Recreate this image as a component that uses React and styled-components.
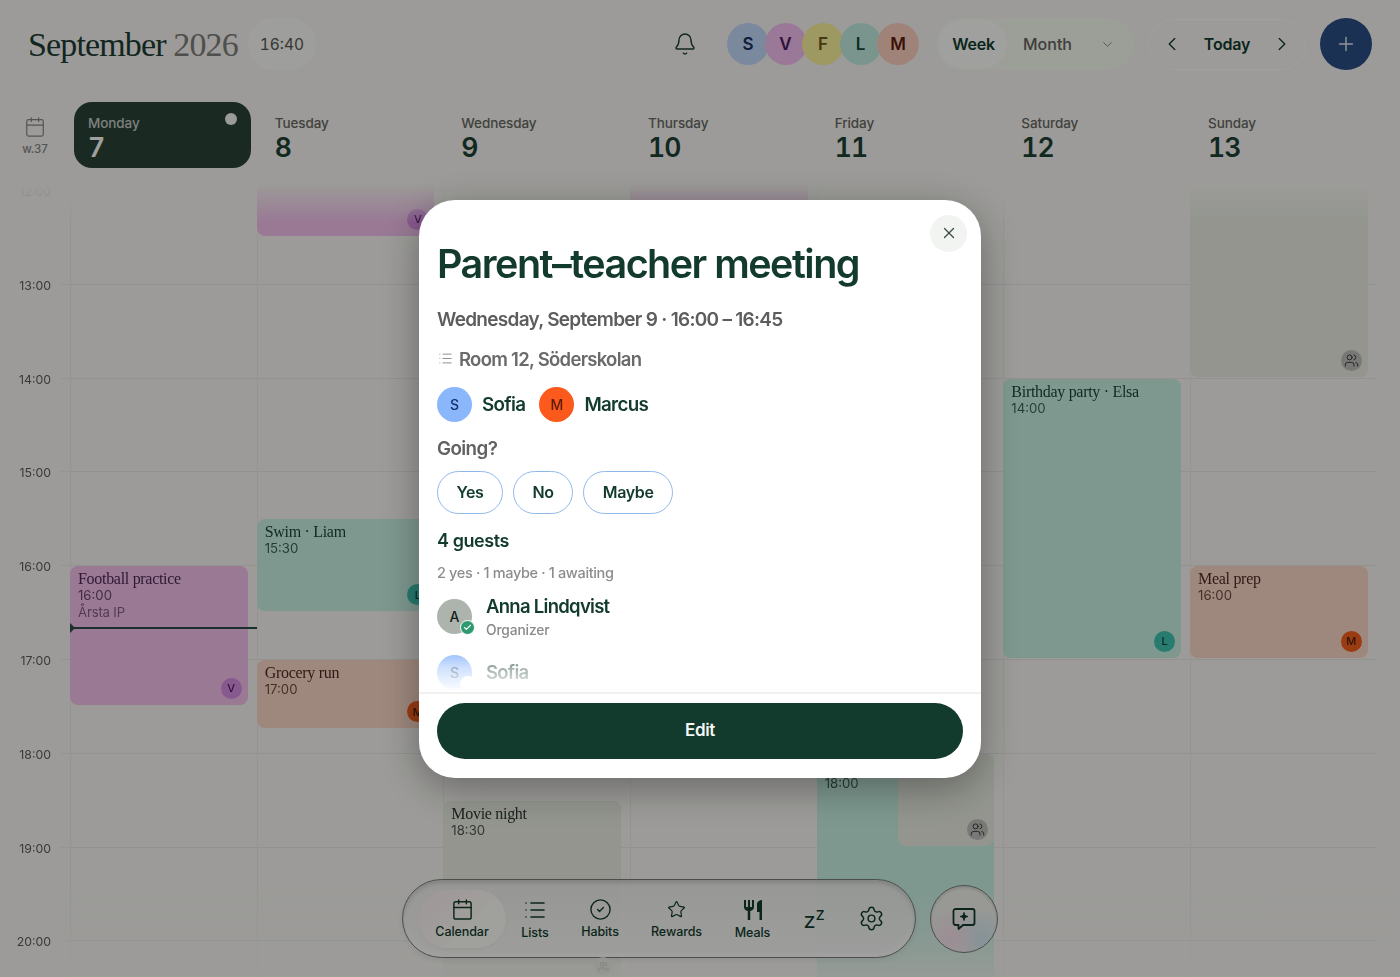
import React from 'react';
import styled, { createGlobalStyle } from 'styled-components';
import { Bell, Calendar, ChevronDown, ChevronLeft, ChevronRight, CircleCheck, List, Plus, Settings, Star, Users, X, Check } from 'lucide-react';
import { MdRestaurant } from 'react-icons/md';

const HOUR = 93.8;
const SANS = '"Inter", "Liberation Sans", sans-serif';
const SERIF = '"Liberation Serif", serif';

const Global = createGlobalStyle`
  * { box-sizing: border-box; }
  html, body { margin: 0; height: 100%; overflow: hidden; background: #f4f3ef; }
  body { font-family: ${SANS}; color: #123a2d; }
`;

const Page = styled.div`
  position: relative; width: 1400px; height: 977px; overflow: hidden; background: #f4f3ef;
  display: flex; flex-direction: column;
`;
const Header = styled.header`
  display: flex; align-items: center; height: 88px; padding: 0 28px; flex: none;
`;
const Title = styled.h1`
  margin: 2px 0 0; font: 400 34px/1 ${SERIF}; letter-spacing: -.86px; color: #1d3c32; white-space: nowrap;
  span { color: #7c7c78; }
`;
const Clock = styled.div`
  margin: 0 0 0 10px; width: 68px; height: 52px; border-radius: 26px; background: #f8f8f4;
  display: flex; align-items: center; justify-content: center; font-size: 15.5px; color: #55564f; font-variant-numeric: tabular-nums;
`;
const BellWrap = styled.div`
  margin-left: auto; margin-right: 1px; display: flex; color: #1d3c32;
`;
const Stack = styled.div`
  margin-left: 29px; display: flex;
`;
const HeadAvatar = styled.div`
  width: 42px; height: 42px; border-radius: 50%; margin-right: -4.5px; background: ${p => p.$bg}; color: ${p => p.$fg};
  display: flex; align-items: center; justify-content: center; font-size: 17px; font-weight: 600;
  &:last-child { margin-right: 0; }
`;
const Switch = styled.div`
  margin-left: 17px; width: 198px; height: 52px; border-radius: 26px; background: #f5f7ee; padding: 2px;
  display: flex; align-items: center; color: #61625d; font-size: 16px; font-weight: 500;
  svg { margin-left: 28px; opacity: .75; }
`;
const Active = styled.div`
  width: 69px; height: 48px; border-radius: 24px; background: #fbfbf8; color: #123a2d; font-weight: 600; letter-spacing: -.25px; padding-left: 2px;
  display: flex; align-items: center; justify-content: center; margin-right: 16px;
`;
const Pager = styled.div`
  margin-left: 14px; width: 158px; height: 51px; border-radius: 26px; border: 1px solid #fafaf7;
  display: flex; align-items: center; justify-content: space-between; padding: 0 12px; color: #123a2d;
  font-size: 16px; font-weight: 600; letter-spacing: -.2px;
`;
const AddButton = styled.div`
  margin-left: 14px; width: 52px; height: 52px; border-radius: 50%; background: #2a4e84; color: #dfe6f0;
  display: flex; align-items: center; justify-content: center;
`;

const WeekRow = styled.div`
  display: flex; height: 66px; margin-top: 14px; flex: none; padding-right: 23.3px;
`;
const WeekNo = styled.div`
  width: 70px; flex: none; display: flex; flex-direction: column; align-items: center; padding-top: 14px;
  color: #84847f; font-size: 11.5px; font-weight: 500; gap: 4px;
`;
const DayHead = styled.div`
  flex: 1; position: relative; margin: 0 5.7px 0 4px; border-radius: 18px; padding: 13px 14px;
  background: ${p => (p.$today ? '#2a4338' : 'transparent')};
`;
const DayName = styled.div`
  font-size: 13.5px; font-weight: 500; line-height: 17px; letter-spacing: -.1px;
  color: ${p => (p.$today ? '#c3c9c5' : '#66665f')};
`;
const DayNum = styled.div`
  font-size: 26.5px; font-weight: 600; line-height: 30px; letter-spacing: -.9px; font-variant-numeric: tabular-nums;
  color: ${p => (p.$today ? '#fafaf8' : '#1d4033')};
`;
const TodayDot = styled.div`
  position: absolute; top: 11px; right: 14px; width: 12px; height: 12px; border-radius: 50%; background: #f2f2ee;
`;

const Grid = styled.div`
  position: relative; flex: 1; display: flex; padding-right: 23.3px; margin-top: 8px; overflow: hidden;
  mask-image: linear-gradient(to bottom, transparent 0, transparent 8px, #000 46px);
`;
const Hours = styled.div`
  width: 70px; flex: none; padding-top: 14px;
  background: repeating-linear-gradient(to bottom, #e9e8e4 0, #e9e8e4 1px, transparent 1px, transparent ${HOUR}px) 60px 14px / 10px 100% no-repeat;
`;
const HourLabel = styled.div`
  height: ${HOUR}px; width: 51px; text-align: right; font-size: 12.3px; color: #5b5c57; transform: translateY(-7px); line-height: 18px;
  opacity: ${p => (p.$dim ? 0.45 : 1)};
`;
const Day = styled.div`
  flex: 1; position: relative; border-left: 1px solid #e9e8e4;
  background: repeating-linear-gradient(to bottom, #e5e4e0 0, #e5e4e0 1px, transparent 1px, transparent ${HOUR}px) 0 14px / 100% 100% no-repeat;
`;
const tones = {
  purple: { bg: '#efbde8', fg: '#4b2a52', av: '#d58be0', avFg: '#4a1c5c' },
  teal: { bg: '#c5eee0', fg: '#1b3d36', av: '#3dc0ae', avFg: '#0f3d38' },
  peach: { bg: '#f8d5c5', fg: '#4d2a20', av: '#ef5e1c', avFg: '#4a1c0a' },
  gray: { bg: '#e6e9df', fg: '#2d352f', av: '#bcbdb9', avFg: '#33352f' },
};
const Event = styled.div`
  position: absolute; border-radius: 8px; padding: 3px 8px; overflow: hidden;
  background: ${p => tones[p.$tone].bg}; color: ${p => tones[p.$tone].fg};
`;
const EventTitle = styled.div`
  font: 400 16px/19px ${SERIF}; letter-spacing: -.3px; white-space: nowrap;
`;
const EventMeta = styled.div`
  font-size: 13.2px; line-height: 16px; opacity: .82; margin-top: -1px;
`;
const EventPlace = styled(EventMeta)`
  margin-top: 1px; opacity: .65; letter-spacing: -.2px;
`;
const EventBadge = styled.div`
  position: absolute; right: 6px; bottom: 6px; width: 21px; height: 21px; border-radius: 50%;
  background: ${p => tones[p.$tone].av}; color: ${p => tones[p.$tone].avFg};
  display: flex; align-items: center; justify-content: center; font-size: 11px; font-weight: 500;
`;
const NowLine = styled.div`
  position: absolute; left: -1px; right: 0; height: 2px; background: #2b4a45; z-index: 3;
  &::before { content: ''; position: absolute; left: 0; top: -4px; border-left: 5px solid #2b4a45; border-top: 5px solid transparent; border-bottom: 5px solid transparent; }
`;
const BottomFade = styled.div`
  position: absolute; left: 60px; right: 0; bottom: 0; height: 90px; z-index: 4;
  background: linear-gradient(to bottom, rgba(244,243,239,0), rgba(244,243,239,.25) 50%, rgba(244,243,239,.8));
  pointer-events: none;
`;

const Dock = styled.div`
  position: absolute; left: 0; right: 0; bottom: 19px; display: flex; justify-content: center; align-items: center; gap: 14px; z-index: 5;
`;
const NavBar = styled.nav`
  position: relative; width: 514px; height: 79px; border-radius: 40px; display: flex; align-items: center; padding-left: 15px;
  border: 1.5px solid #767a77; color: #123a2d;
  background: linear-gradient(to bottom, rgba(236,236,233,.9), rgba(245,245,243,.9) 80%);
  box-shadow: inset 0 3px 4px rgba(0,0,0,.14), inset 0 -3px 6px rgba(255,255,255,.8), 0 3px 6px rgba(0,0,0,.06);
`;
const NavItem = styled.div`
  display: flex; flex-direction: column; align-items: center; gap: 3px; font-size: 12.5px; font-weight: 500; letter-spacing: -.08px;
  width: ${p => p.$w}px; flex: none; height: 58px; justify-content: center; margin-right: ${p => p.$mr || 0}px; border-radius: 29px;
  ${p => p.$active && `background: linear-gradient(135deg, #f8ebee, #fbfaf4 60%, #fbfbf8); box-shadow: 0 1px 3px rgba(0,0,0,.05);`}
`;
const SleepIcon = styled.div`
  font-size: 22px; line-height: 1; font-weight: 400; display: flex; align-items: flex-end; width: 22px; height: 24px;
  span:last-child { font-size: 17px; margin-bottom: 8px; margin-left: 0; }
`;
const ChatButton = styled.div`
  width: 68px; height: 68px; border-radius: 50%; border: 1.5px solid #767a77; color: #123a2d;
  display: flex; align-items: center; justify-content: center;
  background: radial-gradient(circle at 30% 78%, #f4dde8, transparent 45%), radial-gradient(circle at 75% 80%, #cfe5ee, transparent 42%), #eef0ea;
  box-shadow: inset 0 2px 3px rgba(0,0,0,.12);
`;
const HomeHint = styled.div`
  position: absolute; left: 594px; bottom: 2px; width: 18px; height: 18px; border-radius: 50%; background: #e9e9e5; z-index: 5; color: #c2c2be;
  display: flex; align-items: center; justify-content: center;
`;

const Overlay = styled.div`
  position: absolute; inset: 0; background: rgba(0,0,0,.36); display: flex; align-items: center; justify-content: center; z-index: 10;
  backdrop-filter: blur(.5px);
`;
const Modal = styled.div`
  position: relative; width: 562px; height: 578px; background: #fff; border-radius: 36px; display: flex; flex-direction: column; overflow: hidden;
  box-shadow: 0 10px 40px rgba(0,0,0,.34);
`;
const CloseButton = styled.div`
  position: absolute; top: 15px; right: 14px; width: 37px; height: 37px; border-radius: 50%; background: #f1f4f1; color: #3d4a44;
  display: flex; align-items: center; justify-content: center;
`;
const Body = styled.div`
  position: relative; flex: 1; overflow: hidden; padding: 38px 18px 0;
`;
const ModalTitle = styled.h2`
  margin: 0; font-size: 39.5px; line-height: 52px; font-weight: 600; letter-spacing: -1.52px; color: #123a2d; white-space: nowrap;
`;
const DateLine = styled.div`
  margin-top: 17px; font-size: 19px; line-height: 26px; font-weight: 600; color: #5d5d5d; letter-spacing: -.72px; white-space: nowrap;
`;
const Place = styled.div`
  margin-top: 13px; display: flex; align-items: center; gap: 6px; font-size: 18.5px; line-height: 26px; font-weight: 600; color: #6a6a6a; letter-spacing: -.72px;
  svg { margin-left: 1px; color: #8a8a8a; }
`;
const People = styled.div`
  margin-top: 15px; display: flex; align-items: center;
`;
const Avatar = styled.div`
  position: relative; width: 35px; height: 35px; border-radius: 50%; background: ${p => p.$bg}; color: ${p => p.$fg};
  display: flex; align-items: center; justify-content: center; font-size: 14px; font-weight: 500; flex: none;
`;
const PersonName = styled.div`
  margin: 0 14px 0 10px; font-size: 18.8px; font-weight: 600; color: #123a2d; letter-spacing: -.68px;
`;
const Question = styled.div`
  margin-top: 14px; font-size: 18.8px; line-height: 26px; font-weight: 600; color: #616161; letter-spacing: -.6px;
`;
const Answers = styled.div`
  margin-top: 9px; display: flex; gap: 10px;
`;
const Answer = styled.div`
  height: 43px; border-radius: 22px; border: 1px solid #8fb8ea; padding: 0 18.5px; display: flex; align-items: center; font-size: 16px; font-weight: 600; color: #123a2d;
  letter-spacing: -.35px;
`;
const Guests = styled.div`
  margin-top: 15px; font-size: 18px; line-height: 24px; font-weight: 600; color: #123a2d; letter-spacing: -.42px;
`;
const Tally = styled.div`
  margin-top: 11px; font-size: 14.5px; line-height: 18px; font-weight: 500; color: #8c8c8c; letter-spacing: -.35px;
`;
const Guest = styled.div`
  margin-top: ${p => p.$mt}px; display: flex; align-items: center; gap: 14px;
`;
const GuestName = styled.div`
  font-size: 18.5px; line-height: 26px; font-weight: 600; color: #123a2d; letter-spacing: -.72px;
`;
const GuestRole = styled.div`
  font-size: 13.8px; line-height: 20px; font-weight: 500; color: #8a8a8a; letter-spacing: -.15px; margin-top: 1px;
`;
const StatusBadge = styled.div`
  position: absolute; right: -3px; bottom: -1px; width: 15px; height: 15px; border-radius: 50%; background: ${p => p.$bg}; border: 1.5px solid #fff; color: #fff;
  display: flex; align-items: center; justify-content: center;
`;
const FadeOut = styled.div`
  position: absolute; left: 0; right: 0; bottom: 0; height: 44px;
  background: linear-gradient(to bottom, rgba(255,255,255,0), rgba(255,255,255,.6) 45%, #fff);
`;
const Footer = styled.div`
  flex: none; height: 86px; border-top: 2px solid #f1f1f0; padding: 9px 18px 0;
`;
const EditButton = styled.div`
  height: 56px; border-radius: 28px; background: #123a2d; color: #f4f7f5; display: flex; align-items: center; justify-content: center;
  font-size: 17px; font-weight: 600; letter-spacing: -.3px; padding-bottom: 2px;
`;

const at = h => (h - 12) * HOUR + 14;
const Ev = ({ tone, start, end, title, time, place, badge, left = -1, right = 9, z = 1 }) => (
  <Event $tone={tone} style={{ top: at(start) + 1, height: (end - start) * HOUR - 2, left, right, zIndex: z }}>
    {title && <EventTitle>{title}</EventTitle>}
    {time && <EventMeta>{time}</EventMeta>}
    {place && <EventPlace>{place}</EventPlace>}
    {badge && (
      <EventBadge $tone={tone}>
        {badge === 'users' ? <Users size={15} strokeWidth={1.5} /> : badge}
      </EventBadge>
    )}
  </Event>
);

const days = [
  ['Monday', 7],
  ['Tuesday', 8],
  ['Wednesday', 9],
  ['Thursday', 10],
  ['Friday', 11],
  ['Saturday', 12],
  ['Sunday', 13],
];
const columns = [
  [{ tone: 'purple', start: 16, end: 17.5, title: 'Football practice', time: '16:00', place: 'Årsta IP', badge: 'V' }],
  [
    { tone: 'purple', start: 11, end: 12.5, badge: 'V' },
    { tone: 'teal', start: 15.5, end: 16.5, title: 'Swim · Liam', time: '15:30', badge: 'L' },
    { tone: 'peach', start: 17, end: 17.75, title: 'Grocery run', time: '17:00', badge: 'M' },
  ],
  [{ tone: 'gray', start: 18.5, end: 21, title: 'Movie night', time: '18:30' }],
  [{ tone: 'purple', start: 11, end: 12.5 }],
  [
    { tone: 'teal', start: 18, end: 21, title: '\u00a0', time: '18:00' },
    { tone: 'gray', start: 18, end: 19, left: 80, z: 2, badge: 'users' },
  ],
  [{ tone: 'teal', start: 14, end: 17, title: 'Birthday party · Elsa', time: '14:00', badge: 'L' }],
  [
    { tone: 'gray', start: 11, end: 14, badge: 'users' },
    { tone: 'peach', start: 16, end: 17, title: 'Meal prep', time: '16:00', badge: 'M' },
  ],
];
const hours = ['12:00', '13:00', '14:00', '15:00', '16:00', '17:00', '18:00', '19:00', '20:00'];

const ChatIcon = () => (
  <svg width="26" height="26" viewBox="0 0 26 26" fill="none" stroke="currentColor" strokeWidth="1.8" strokeLinejoin="round">
    <path d="M4.500 3h17a2 2 0 0 1 2 2v12a2 2 0 0 1-2 2H12l-4.500 4v-4h-3a2 2 0 0 1-2-2V5a2 2 0 0 1 2-2z" />
    <path d="M13 6.500c.4 2.600 1.400 3.600 4 4-2.600.4-3.600 1.400-4 4-.4-2.600-1.400-3.600-4-4 2.600-.4 3.600-1.400 4-4z" fill="currentColor" strokeWidth="1" />
  </svg>
);

export default function App() {
  return (
    <Page>
      <Global />
      <Header>
        <Title>September <span>2026</span></Title>
        <Clock>16:40</Clock>
        <BellWrap><Bell size={24} strokeWidth={1.4} /></BellWrap>
        <Stack>
          <HeadAvatar $bg="#bfd6f6" $fg="#16305e">S</HeadAvatar>
          <HeadAvatar $bg="#efbdec" $fg="#4a1c5c">V</HeadAvatar>
          <HeadAvatar $bg="#f8ee9c" $fg="#6b5a12">F</HeadAvatar>
          <HeadAvatar $bg="#bfeade" $fg="#10483e">L</HeadAvatar>
          <HeadAvatar $bg="#f9cdbd" $fg="#5c1c0a">M</HeadAvatar>
        </Stack>
        <Switch>
          <Active>Week</Active>
          Month
          <ChevronDown size={15} strokeWidth={1.5} />
        </Switch>
        <Pager>
          <ChevronLeft size={22} strokeWidth={1.5} />
          Today
          <ChevronRight size={22} strokeWidth={1.5} />
        </Pager>
        <AddButton><Plus size={22} strokeWidth={1.6} /></AddButton>
      </Header>

      <WeekRow>
        <WeekNo>
          <Calendar size={22} strokeWidth={1.3} />
          w.37
        </WeekNo>
        {days.map(([name, n], i) => (
          <DayHead key={name} $today={i === 0}>
            <DayName $today={i === 0}>{name}</DayName>
            <DayNum $today={i === 0}>{n}</DayNum>
            {i === 0 && <TodayDot />}
          </DayHead>
        ))}
      </WeekRow>

      <Grid>
        <Hours>
          {hours.map((h, i) => <HourLabel key={h} $dim={i === 0}>{h}</HourLabel>)}
        </Hours>
        {columns.map((evs, i) => (
          <Day key={i}>
            {evs.map((e, j) => <Ev key={j} {...e} />)}
            {i === 0 && <NowLine style={{ top: at(16 + 40 / 60) - 1 }} />}
          </Day>
        ))}
        <BottomFade />
      </Grid>

      <Dock>
        <NavBar>
          <NavItem $active $w={88} $mr={14}><Calendar size={23} strokeWidth={1.5} />Calendar</NavItem>
          <NavItem $w={30} $mr={31}><List size={24} strokeWidth={1.6} />Lists</NavItem>
          <NavItem $w={38} $mr={31.5}><CircleCheck size={23} strokeWidth={1.4} />Habits</NavItem>
          <NavItem $w={52} $mr={32}><Star size={19} strokeWidth={1.5} style={{ margin: '2px 0' }} />Rewards</NavItem>
          <NavItem $w={36} $mr={33}><MdRestaurant size={24} />Meals</NavItem>
          <NavItem $w={22} $mr={33}><SleepIcon><span>z</span><span>z</span></SleepIcon></NavItem>
          <NavItem $w={26}><Settings size={27} strokeWidth={1.3} /></NavItem>
        </NavBar>
        <ChatButton><ChatIcon /></ChatButton>
      </Dock>
      <HomeHint><Users size={11} strokeWidth={1.5} /></HomeHint>

      <Overlay>
        <Modal>
          <CloseButton><X size={18} strokeWidth={1.7} /></CloseButton>
          <Body>
            <ModalTitle>Parent–teacher meeting</ModalTitle>
            <DateLine>Wednesday, September 9 · 16:00 – 16:45</DateLine>
            <Place><List size={15} strokeWidth={1.5} />Room 12, Söderskolan</Place>
            <People>
              <Avatar $bg="#8ab6fb" $fg="#12306a">S</Avatar>
              <PersonName>Sofia</PersonName>
              <Avatar $bg="#fb5a1c" $fg="#5a1c08">M</Avatar>
              <PersonName>Marcus</PersonName>
            </People>
            <Question>Going?</Question>
            <Answers>
              <Answer>Yes</Answer>
              <Answer>No</Answer>
              <Answer>Maybe</Answer>
            </Answers>
            <Guests>4 guests</Guests>
            <Tally>2 yes · 1 maybe · 1 awaiting</Tally>
            <Guest $mt={11}>
              <Avatar $bg="#adb3ad" $fg="#13211b">A
                <StatusBadge $bg="#2f9a6e"><Check size={9} strokeWidth={3} /></StatusBadge>
              </Avatar>
              <div>
                <GuestName>Anna Lindqvist</GuestName>
                <GuestRole>Organizer</GuestRole>
              </div>
            </Guest>
            <Guest $mt={15}>
              <Avatar $bg="#8ab6fb" $fg="#12306a">S
                <StatusBadge $bg="#ffffff" />
              </Avatar>
              <GuestName>Sofia</GuestName>
            </Guest>
            <FadeOut />
          </Body>
          <Footer><EditButton>Edit</EditButton></Footer>
        </Modal>
      </Overlay>
    </Page>
  );
}
